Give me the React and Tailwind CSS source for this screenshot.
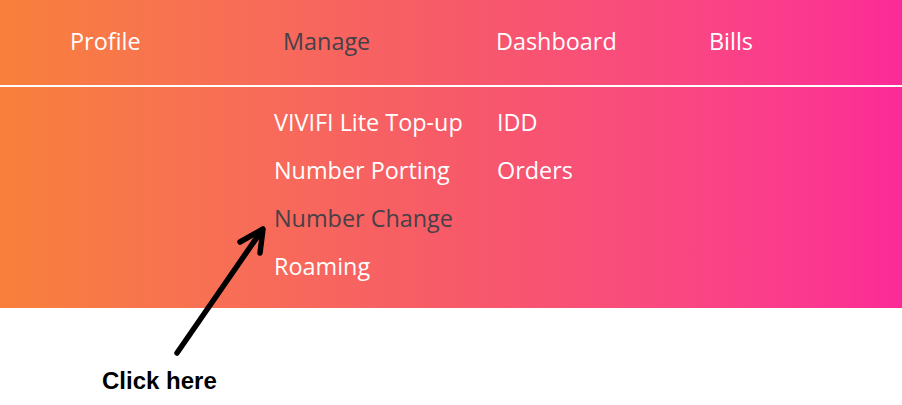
export default function App() {
  const nav = [
    { label: "Profile", active: false },
    { label: "Manage", active: true },
    { label: "Dashboard", active: false },
    { label: "Bills", active: false },
  ];
  const colA = [
    { label: "VIVIFI Lite Top-up", active: false },
    { label: "Number Porting", active: false },
    { label: "Number Change", active: true },
    { label: "Roaming", active: false },
  ];
  const colB = [
    { label: "IDD", active: false },
    { label: "Orders", active: false },
  ];

  return (
    <div className="relative w-[902px] h-[405px] bg-white overflow-hidden font-['Open_Sans',sans-serif]">
      {/* Gradient menu */}
      <div className="h-[308px] bg-gradient-to-r from-[#f8803a] via-[#f75a68] to-[#fc2a97]">
        <div className="flex items-center h-[87px] pl-[70px] pb-[2px] border-b-2 border-white">
          {nav.map((item) => (
            <div
              key={item.label}
              className={`w-[213px] shrink-0 text-[23.4px] leading-none ${item.active ? "text-[#474047]" : "text-white"}`}
            >
              {item.label}
            </div>
          ))}
        </div>

        <div className="flex pl-[274px] pt-[19px]">
          <div className="w-[223px] shrink-0 flex flex-col">
            {colA.map((item) => (
              <div
                key={item.label}
                className={`h-[48px] text-[23.4px] leading-[32px] whitespace-nowrap ${item.active ? "text-[#474047]" : "text-white"}`}
              >
                {item.label}
              </div>
            ))}
          </div>
          <div className="flex flex-col">
            {colB.map((item) => (
              <div key={item.label} className="h-[48px] text-[23.4px] leading-[32px] text-white">
                {item.label}
              </div>
            ))}
          </div>
        </div>
      </div>

      {/* Annotation */}
      <svg className="absolute left-0 top-0" width="902" height="405" viewBox="0 0 902 405">
        <g stroke="#000" strokeWidth="5.5" strokeLinecap="round" strokeLinejoin="round" fill="none">
          <line x1="177" y1="353" x2="262" y2="230" />
          <polyline points="240,242 263,229 260,253" />
        </g>
      </svg>
      <div className="absolute left-[102px] top-[369px] text-[24px] leading-none font-bold text-black font-['Liberation_Sans',sans-serif]">
        Click here
      </div>
    </div>
  );
}
